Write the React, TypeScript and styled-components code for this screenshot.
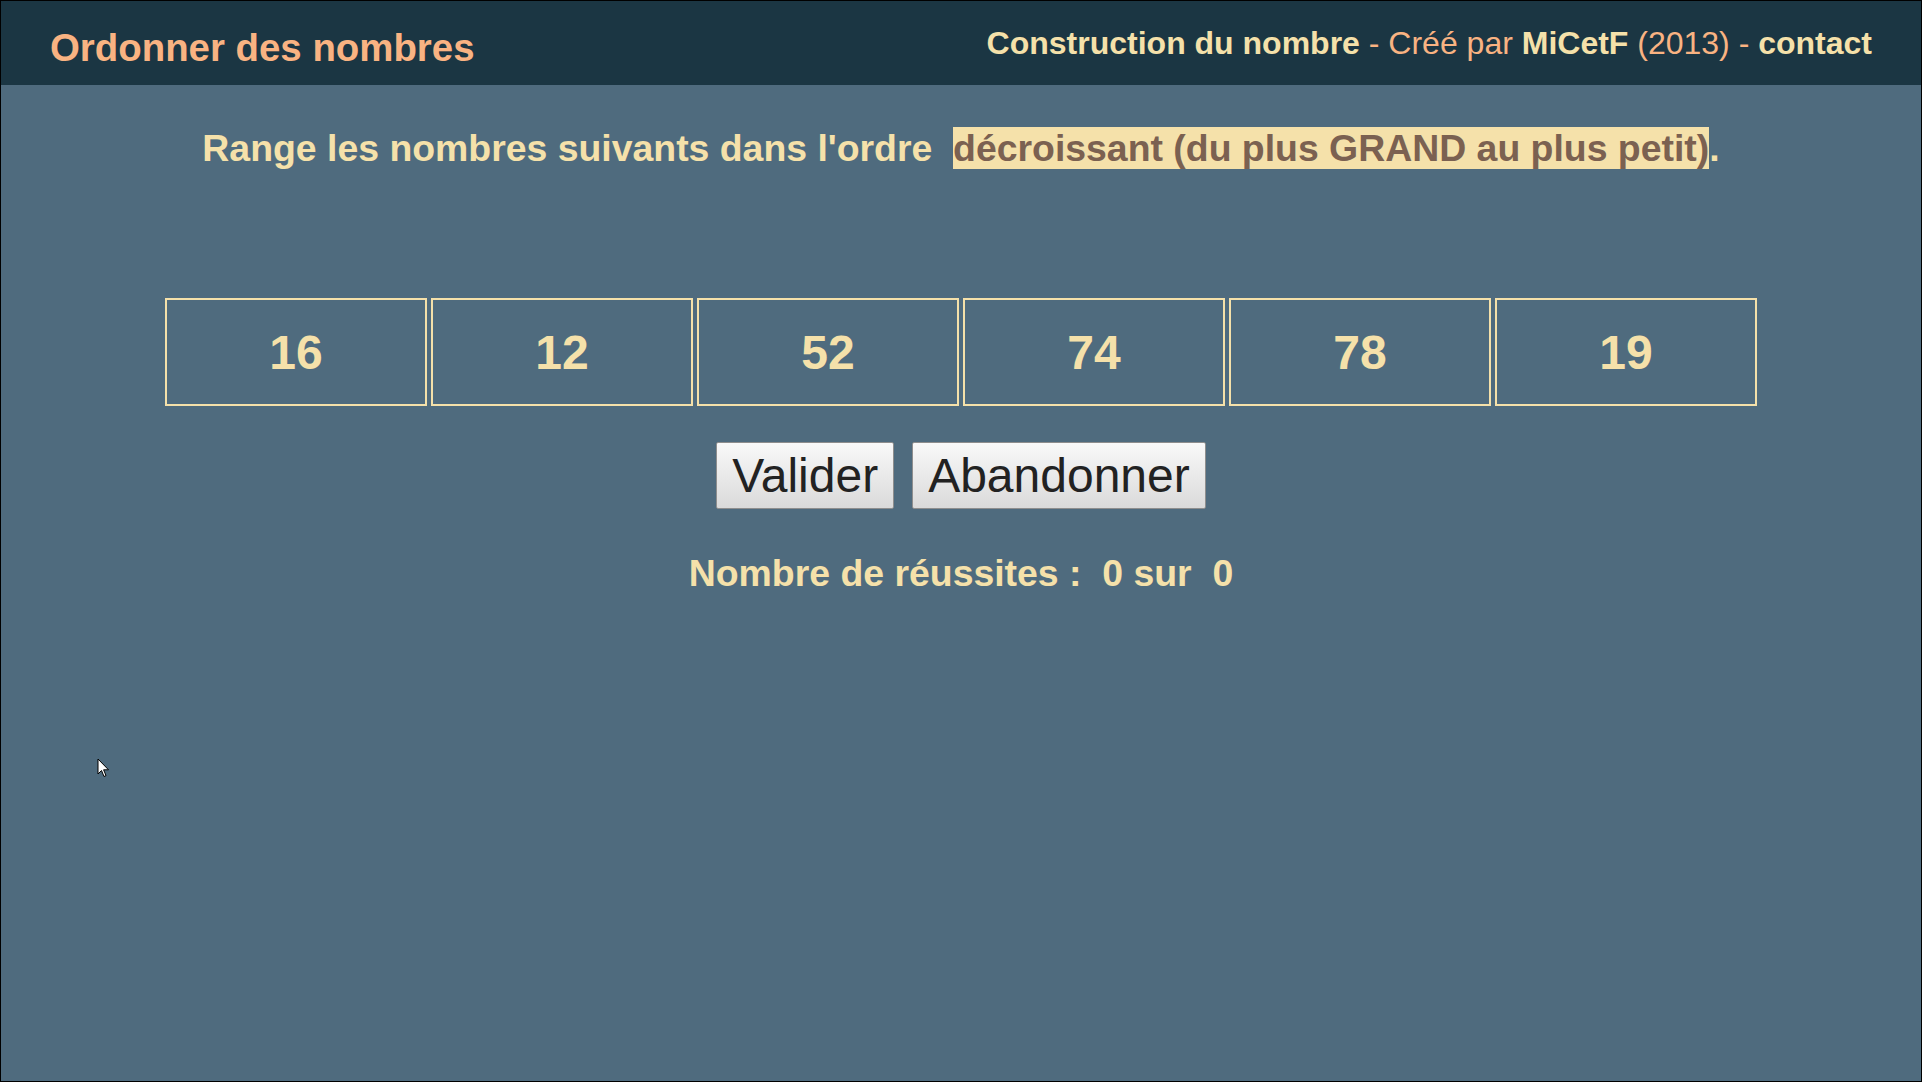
import styled, { createGlobalStyle } from "styled-components";

const GlobalStyle = createGlobalStyle`
  html, body {
    margin: 0;
    padding: 0;
    background: #000;
  }
  body {
    font-family: "Liberation Sans", Arial, sans-serif;
  }
`;

const Page = styled.div`
  position: relative;
  box-sizing: border-box;
  height: 100vh;
  border: 1px solid #000;
  background-color: #4f6b7e;
  display: flex;
  flex-direction: column;
  font-family: "Liberation Sans", Arial, sans-serif;
`;

const Header = styled.header`
  height: 84px;
  background-color: #1b3643;
  display: flex;
  justify-content: space-between;
  align-items: flex-start;
  padding: 0 49px;
`;

const Title = styled.h1`
  margin: 25px 0 0 0;
  font-size: 38.4px;
  line-height: 44px;
  font-weight: 700;
  color: #f9b382;
`;

const Credits = styled.div`
  margin-top: 24px;
  font-size: 32px;
  line-height: 37px;
  color: #f9b382;
  white-space: pre;
`;

const Strong = styled.span`
  font-weight: 700;
  color: #f5e1aa;
`;

const Main = styled.main`
  display: flex;
  flex-direction: column;
  align-items: center;
`;

const Instruction = styled.p`
  margin: 42px 0 0 0;
  font-size: 37.4px;
  line-height: 43px;
  font-weight: 700;
  color: #f5e1aa;
  white-space: pre;
`;

const Highlight = styled.span`
  background-color: #f5e1aa;
  color: #7b6151;
`;

const Row = styled.div`
  margin-top: 128px;
  display: flex;
  gap: 4px;
`;

const NumberBox = styled.div`
  box-sizing: border-box;
  width: 262px;
  height: 108px;
  border: 2px solid #f5e1aa;
  display: flex;
  align-items: center;
  justify-content: center;
  font-size: 48px;
  font-weight: 700;
  color: #f5e1aa;
`;

const Actions = styled.div`
  margin-top: 36px;
  display: flex;
  gap: 18px;
`;

const Button = styled.button`
  box-sizing: border-box;
  height: 67px;
  padding: 0 15px;
  border: 1px solid #8e8e8e;
  border-radius: 2px;
  background: linear-gradient(#f9f9f9, #dadada);
  font-family: "Liberation Sans", Arial, sans-serif;
  font-size: 48px;
  color: #222;
  cursor: pointer;
`;

const Score = styled.p`
  margin: 43px 0 0 0;
  font-size: 37.4px;
  line-height: 43px;
  font-weight: 700;
  color: #f5e1aa;
  white-space: pre;
`;

const Pointer = styled.svg`
  position: absolute;
  left: 96px;
  top: 757px;
`;

const numbers = [16, 12, 52, 74, 78, 19];

export default function App() {
  return (
    <>
      <GlobalStyle />
      <Page>
        <Header>
          <Title>Ordonner des nombres</Title>
          <Credits>
            <Strong>Construction du nombre</Strong>
            {" - Créé par "}
            <Strong>MiCetF</Strong>
            {" (2013) - "}
            <Strong>contact</Strong>
          </Credits>
        </Header>
        <Main>
          <Instruction>
            {"Range les nombres suivants dans l'ordre\u00a0 "}
            <Highlight>décroissant (du plus GRAND au plus petit)</Highlight>.
          </Instruction>
          <Row>
            {numbers.map((n) => (
              <NumberBox key={n}>{n}</NumberBox>
            ))}
          </Row>
          <Actions>
            <Button>Valider</Button>
            <Button>Abandonner</Button>
          </Actions>
          <Score>{"Nombre de réussites :  0 sur  0"}</Score>
        </Main>
        <Pointer width="13" height="20" viewBox="0 0 13 20">
          <path
            d="M1 1 L1 16 L4.5 12.5 L7 18.5 L9 17.6 L6.6 11.8 L11.5 11.8 Z"
            fill="#fff"
            stroke="#000"
            strokeWidth="1"
            strokeLinejoin="miter"
          />
        </Pointer>
      </Page>
    </>
  );
}
